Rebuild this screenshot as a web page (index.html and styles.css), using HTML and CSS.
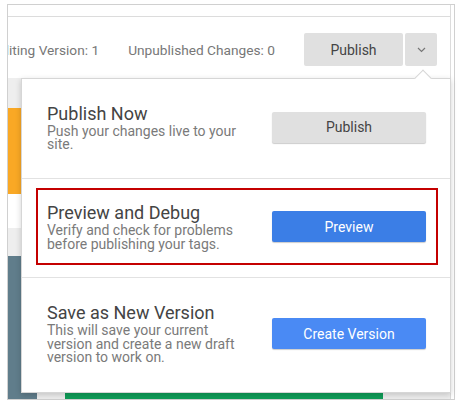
FILE: index.html
```html
<!DOCTYPE html>
<html lang="en">
<head>
  <meta charset="UTF-8">
  <title>Submit</title>
  <link rel="stylesheet" href="styles.css">
</head>
<body>

  <div class="frame">
    <div class="panel">
      <div class="topbar"></div>

      <!-- Header -->
      <div class="header">
        <span class="meta">Editing Version: 1</span>
        <span class="meta">Unpublished Changes: 0</span>
        <div class="split">
          <button class="hdr-btn">Publish</button>
          <button class="hdr-btn caret-btn">
            <svg width="9" height="6" viewBox="0 0 9 6"><path d="M1 1 L4.5 4.5 L8 1" fill="none" stroke="#777" stroke-width="1.2"/></svg>
          </button>
        </div>
      </div>

      <!-- Workspace behind the menu -->
      <div class="workspace">
        <div class="side">
          <div class="blk blk-gray"></div>
          <div class="blk blk-orange"></div>
          <div class="blk blk-white"></div>
          <div class="blk blk-gray2"></div>
          <div class="blk blk-slate"></div>
        </div>
        <div class="main">
          <div class="main-bottom"><div class="green-bar"></div></div>
        </div>
      </div>

      <!-- Submit menu -->
      <div class="popup">
        <div class="option option-first">
          <div class="option-row">
            <div class="option-text">
              <h3>Publish Now</h3>
              <p>Push your changes live to your site.</p>
            </div>
            <button class="btn btn-gray">Publish</button>
          </div>
        </div>
        <div class="option option-mid">
          <div class="option-row selected">
            <div class="option-text">
              <h3>Preview and Debug</h3>
              <p>Verify and check for problems before publishing your tags.</p>
            </div>
            <button class="btn btn-blue btn-dark">Preview</button>
          </div>
        </div>
        <div class="option option-last">
          <div class="option-row">
            <div class="option-text">
              <h3>Save as New Version</h3>
              <p>This will save your current version and create a new draft version to work on.</p>
            </div>
            <button class="btn btn-blue">Create Version</button>
          </div>
        </div>
      </div>
    </div>
  </div>

</body>
</html>
```

FILE: styles.css
```css
* {
  margin: 0;
  padding: 0;
  box-sizing: border-box;
}

body {
  font-family: Roboto, 'Liberation Sans', sans-serif;
  background-color: #fff;
}

.frame {
  width: 448px;
  height: 396px;
  margin: 4px 0 0 7px;
  border: 1px solid #d0d0d0;
}

.panel {
  position: relative;
  width: 443px;
  height: 100%;
  border-right: 1px solid #dcdcdc;
  display: flex;
  flex-direction: column;
}

.topbar {
  height: 12px;
  border-bottom: 1px solid #dcdcdc;
}

/* Header */
.header {
  height: 61px;
  padding: 4px 13px 0 0;
  display: flex;
  align-items: center;
  justify-content: flex-end;
  overflow: hidden;
}

.header .meta {
  flex-shrink: 0;
  margin-right: 29px;
  font-size: 13.7px;
  color: #777;
  white-space: nowrap;
}

.split {
  flex-shrink: 0;
  display: flex;
  gap: 2px;
}

.hdr-btn {
  width: 99px;
  height: 33px;
  border: none;
  border-radius: 2px;
  background-color: #e0e0e0;
  color: #444;
  font-family: inherit;
  font-size: 14px;
}

.hdr-btn.caret-btn {
  width: 32px;
  display: flex;
  align-items: center;
  justify-content: center;
}

/* Workspace */
.workspace {
  flex: 1;
  display: flex;
}

.side {
  width: 29px;
  display: flex;
  flex-direction: column;
}

.blk-gray { height: 30px; background-color: #eee; }
.blk-orange { height: 86px; background-color: #f9a825; }
.blk-white { height: 34px; background-color: #fff; }
.blk-gray2 { height: 28px; background-color: #eee; }
.blk-slate { flex: 1; background-color: #607d8b; }

.main {
  flex: 1;
  display: flex;
  flex-direction: column;
  justify-content: flex-end;
}

.main-bottom {
  height: 6px;
  background-color: #eee;
}

.green-bar {
  width: 318px;
  height: 100%;
  margin-left: 28px;
  background-color: #0f9d58;
}

/* Popup menu */
.popup {
  position: absolute;
  left: 13px;
  top: 73px;
  width: 430px;
  height: 315px;
  background-color: #fff;
  border: 1px solid #d6d6d6;
  box-shadow: 0 2px 6px rgba(0, 0, 0, 0.18);
  display: flex;
  flex-direction: column;
}

.popup::before {
  content: '';
  position: absolute;
  left: 395px;
  top: -7px;
  width: 11px;
  height: 11px;
  background-color: #fff;
  border-top: 1px solid #d6d6d6;
  border-left: 1px solid #d6d6d6;
  transform: rotate(45deg);
}

.option {
  display: flex;
  padding: 9px 12px 12px 14px;
  border-bottom: 1px solid #e2e2e2;
}

.option-first { height: 100px; }
.option-mid { height: 99px; }
.option-last { flex: 1; border-bottom: none; }

.option-row {
  flex: 1;
  display: flex;
  align-items: center;
  justify-content: space-between;
  padding: 0 10px 0 9px;
  border: 2px solid transparent;
}

.option-row.selected {
  border-color: #c40000;
}

.option-text {
  width: 200px;
}

.option-text h3 {
  font-size: 18px;
  font-weight: normal;
  line-height: 22px;
  color: #444;
}

.option-text p {
  font-size: 14px;
  line-height: 13.5px;
  color: #7a7a7a;
}

.btn {
  width: 154px;
  height: 31px;
  border: none;
  border-radius: 2px;
  font-family: inherit;
  font-size: 14px;
  box-shadow: 0 1px 1px rgba(0, 0, 0, 0.2);
}

.btn-gray {
  background-color: #e0e0e0;
  color: #444;
}

.btn-blue {
  background-color: #4a8af4;
  color: #fff;
}

.btn-blue.btn-dark {
  background-color: #3b7ee6;
}
```
